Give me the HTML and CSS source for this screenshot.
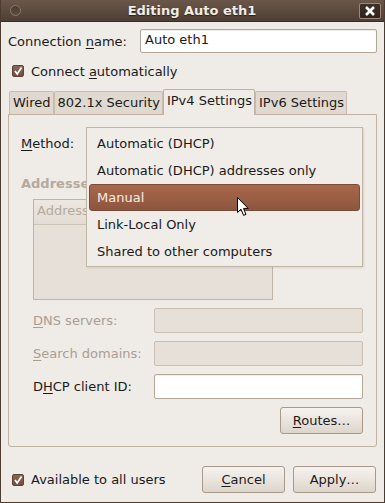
FILE: index.html
```html
<!DOCTYPE html>
<html lang="en">
<head>
  <meta charset="UTF-8" />
  <title>Editing Auto eth1</title>
  <link rel="stylesheet" href="styles.css">
</head>
<body>
  <div class="window">
    <div class="titlebar">
      <span class="title-dot"></span>
      <span class="title">Editing Auto eth1</span>
      <span class="btn-close">
        <svg width="12" height="10" viewBox="0 0 12 10"><path d="M2 1 L10 9 M10 1 L2 9" stroke="#fff" stroke-width="2.6"/></svg>
      </span>
    </div>

    <div class="content">
      <div class="name-row">
        <label>Connection <u>n</u>ame:</label>
        <div class="entry name-entry">Auto eth1</div>
      </div>

      <div class="check-row">
        <span class="checkbox">
          <svg width="10" height="10" viewBox="0 0 10 10"><path d="M2 5 L4.2 8 L8.5 1.5" fill="none" stroke="#fff" stroke-width="1.8"/></svg>
        </span>
        <span>Connect <u>a</u>utomatically</span>
      </div>

      <div class="tabs">
        <div class="tab">Wired</div>
        <div class="tab">802.1x Security</div>
        <div class="tab active">IPv4 Settings</div>
        <div class="tab">IPv6 Settings</div>
      </div>

      <div class="panel">
        <div class="method-row"><u>M</u>ethod:</div>

        <div class="section-label">Addresses</div>
        <div class="addr-list">
          <div class="addr-head">Address</div>
        </div>

        <div class="form">
          <label class="disabled"><u>D</u>NS servers:</label>
          <div class="entry off"></div>
          <label class="disabled"><u>S</u>earch domains:</label>
          <div class="entry off"></div>
          <label>D<u>H</u>CP client ID:</label>
          <div class="entry"></div>
        </div>

        <div class="routes-row">
          <button class="btn btn-routes"><u>R</u>outes…</button>
        </div>

        <div class="menu">
          <div class="menu-item">Automatic (DHCP)</div>
          <div class="menu-item">Automatic (DHCP) addresses only</div>
          <div class="menu-item selected">Manual</div>
          <div class="menu-item">Link-Local Only</div>
          <div class="menu-item">Shared to other computers</div>
        </div>

        <svg class="cursor" width="13" height="20" viewBox="0 0 13 20">
          <path d="M0.5 0.5 L0.5 15.5 L4 12.2 L6.6 18.4 L9 17.4 L6.5 11.4 L11.2 11.4 Z" fill="#fff" stroke="#000" stroke-width="1"/>
        </svg>
      </div>
    </div>

    <div class="footer">
      <div class="check-row">
        <span class="checkbox">
          <svg width="10" height="10" viewBox="0 0 10 10"><path d="M2 5 L4.2 8 L8.5 1.5" fill="none" stroke="#fff" stroke-width="1.8"/></svg>
        </span>
        <span>Available to all users</span>
      </div>
      <div class="buttons">
        <button class="btn"><u>C</u>ancel</button>
        <button class="btn">Apply…</button>
      </div>
    </div>
  </div>
</body>
</html>
```

FILE: styles.css
```css
body {
  margin: 0;
  background: #efebe7;
  font-family: 'DejaVu Sans', 'Liberation Sans', sans-serif;
  font-size: 13px;
  color: #1a1a1a;
}

u {
  text-decoration-thickness: 1px;
  text-underline-offset: 2px;
}

.window {
  width: 385px;
  height: 503px;
  box-sizing: border-box;
  border: 1px solid #4b3b31;
  border-top: none;
  background: #efebe7;
  display: flex;
  flex-direction: column;
  overflow: hidden;
}

/* title bar */
.titlebar {
  height: 22px;
  flex: none;
  display: flex;
  align-items: center;
  padding: 0 3px 0 9px;
  background: linear-gradient(#6a5749, #4e3e33);
  border-bottom: 1px solid #3a2d25;
  box-sizing: border-box;
}

.title-dot {
  width: 11px;
  height: 11px;
  border-radius: 50%;
  border: 1px solid #8a7768;
  background: linear-gradient(#4a3a2f, #5d4b3f);
  box-sizing: border-box;
}

.title {
  flex: 1;
  text-align: center;
  color: #f2ece6;
  font-weight: bold;
  font-size: 13px;
  text-shadow: 0 1px 1px #2a2019;
  padding-left: 4px;
}

.btn-close {
  width: 22px;
  height: 16px;
  box-sizing: border-box;
  border: 1px solid #9b8878;
  border-radius: 2px;
  background: linear-gradient(#3f3129, #2f241d);
  display: flex;
  align-items: center;
  justify-content: center;
}

/* main content */
.content {
  padding: 7px 7px 0 7px;
}

.name-row {
  display: flex;
  align-items: center;
  justify-content: space-between;
}

.entry {
  height: 25px;
  box-sizing: border-box;
  border: 1px solid #b3a798;
  border-radius: 2px;
  background: #fff;
  padding: 3px 5px;
  box-shadow: inset 0 1px 1px rgba(0, 0, 0, 0.08);
}

.name-entry {
  width: 237px;
  height: 24px;
  padding: 2px 4px;
}

.entry.off {
  background: #e6e0d9;
  border-color: #c9beb1;
  box-shadow: none;
}

.check-row {
  display: flex;
  align-items: center;
  gap: 7px;
  height: 18px;
  margin-top: 9px;
  padding-left: 4px;
}

.checkbox {
  width: 12px;
  height: 12px;
  box-sizing: border-box;
  border: 1px solid #5e4234;
  border-radius: 2px;
  background: linear-gradient(#8a6654, #6f4f3f);
  display: flex;
  align-items: center;
  justify-content: center;
}

/* notebook */
.tabs {
  display: flex;
  align-items: flex-end;
  height: 25px;
  margin-top: 9px;
  padding-left: 1px;
  position: relative;
  z-index: 1;
}

.tab {
  height: 23px;
  box-sizing: border-box;
  padding: 3px 2px 0 3px;
  background: #e0d9d0;
  border: 1px solid #c8bcae;
  border-bottom: none;
  border-radius: 2px 2px 0 0;
  white-space: nowrap;
}

.tab.active {
  height: 26px;
  margin-bottom: -1px;
  padding-top: 3px;
  background: #efebe7;
  border-color: #bfb2a3;
}

.panel {
  position: relative;
  height: 333px;
  box-sizing: border-box;
  border: 1px solid #bfb2a3;
  border-radius: 0 0 3px 3px;
  padding: 0 13px 0 12px;
}

.method-row {
  height: 24px;
  margin-top: 16px;
  display: flex;
  align-items: center;
}

.section-label {
  margin-top: 21px;
  height: 16px;
  line-height: 16px;
  font-weight: bold;
  color: #b5aa9c;
}

.addr-list {
  width: 240px;
  height: 101px;
  margin: 7px 0 0 12px;
  box-sizing: border-box;
  border: 1px solid #c0b4a6;
  background: #e6e0d9;
}

.addr-head {
  height: 25px;
  box-sizing: border-box;
  padding: 3px 3px;
  color: #b5aa9c;
  background: linear-gradient(#ece7e1, #e3ddd5);
  border-bottom: 1px solid #cdc3b7;
}

.form {
  display: grid;
  grid-template-columns: 121px 209px;
  row-gap: 8px;
  align-items: center;
  margin: 8px 0 0 12px;
}

.disabled {
  color: #a89e92;
}

.routes-row {
  display: flex;
  justify-content: flex-end;
  margin-top: 8px;
}

.btn {
  height: 27px;
  width: 83px;
  box-sizing: border-box;
  border: 1px solid #a8998a;
  border-radius: 3px;
  background: linear-gradient(#f5f2ee, #e9e3dc 55%, #ddd5cb);
  font-family: inherit;
  font-size: 13px;
  color: #1a1a1a;
  padding: 0;
}

/* popup menu over the panel */
.menu {
  position: absolute;
  left: 77px;
  top: 12px;
  width: 277px;
  height: 140px;
  box-sizing: border-box;
  border: 1px solid #c2b6a7;
  background: #f0ece8;
  padding: 2px;
  box-shadow: 1px 1px 2px rgba(0, 0, 0, 0.1);
}

.menu-item {
  height: 27px;
  line-height: 27px;
  padding-left: 8px;
}

.menu-item.selected {
  background: linear-gradient(#a8684c, #9c5f45 50%, #8c553e);
  border: 1px solid #7c4a35;
  border-radius: 3px;
  color: #f6ede6;
  line-height: 25px;
  box-sizing: border-box;
  padding-left: 7px;
}

.cursor {
  position: absolute;
  left: 228px;
  top: 82px;
}

/* footer */
.footer {
  display: flex;
  align-items: center;
  justify-content: space-between;
  margin-top: 19px;
  padding: 0 8px 0 7px;
}

.footer .check-row {
  margin-top: 0;
}

.buttons {
  display: flex;
  gap: 8px;
}
```
